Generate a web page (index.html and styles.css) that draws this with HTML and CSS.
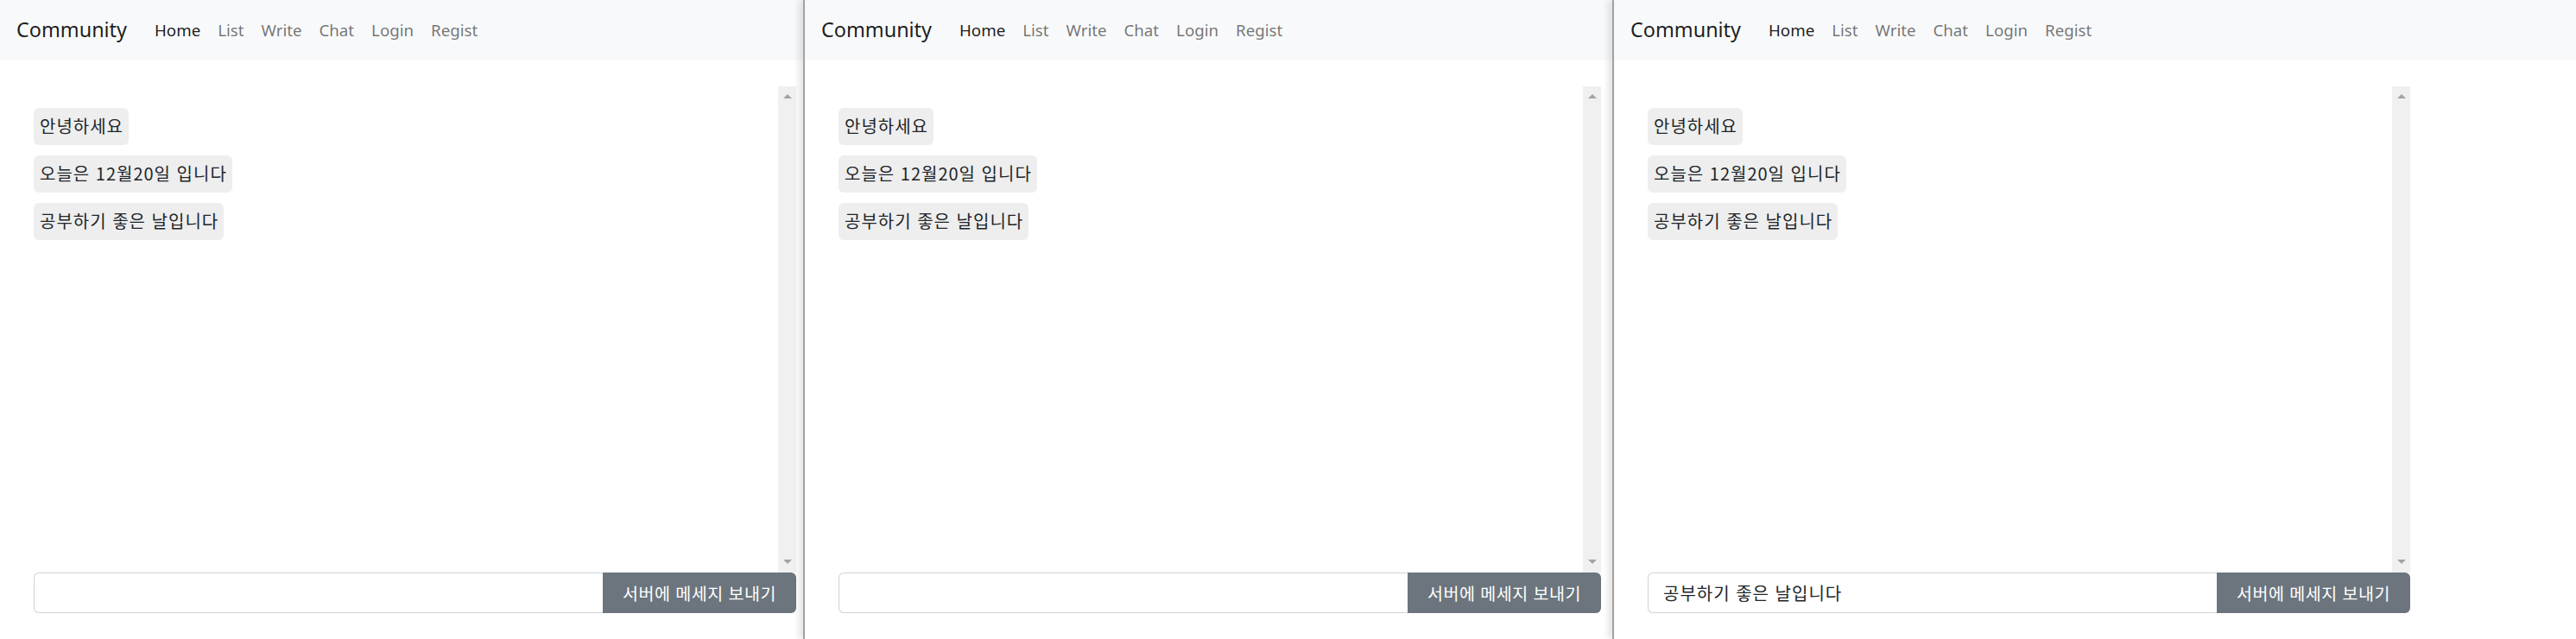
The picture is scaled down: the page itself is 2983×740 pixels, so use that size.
FILE: index.html
```html
<!DOCTYPE html>
<html lang="ko">
<head>
<meta charset="utf-8">
<title>Community Chat</title>
<link rel="stylesheet" href="styles.css">
</head>
<body>
<div class="desk">
  <section class="window w1">
    <nav class="navbar">
      <span class="brand">Community</span>
      <a class="nav-link active">Home</a>
      <a class="nav-link">List</a>
      <a class="nav-link">Write</a>
      <a class="nav-link">Chat</a>
      <a class="nav-link">Login</a>
      <a class="nav-link">Regist</a>
    </nav>
    <div class="chat">
      <div class="scrollbox">
        <div class="messages">
          <div class="bubble">안녕하세요</div>
          <div class="bubble">오늘은 12월20일 입니다</div>
          <div class="bubble">공부하기 좋은 날입니다</div>
        </div>
        <div class="scrollbar"><span class="arrow up"></span><span class="arrow down"></span></div>
      </div>
      <div class="input-group">
        <input class="field" type="text" value="">
        <button class="send">서버에 메세지 보내기</button>
      </div>
    </div>
  </section>
  <section class="window w2">
    <nav class="navbar">
      <span class="brand">Community</span>
      <a class="nav-link active">Home</a>
      <a class="nav-link">List</a>
      <a class="nav-link">Write</a>
      <a class="nav-link">Chat</a>
      <a class="nav-link">Login</a>
      <a class="nav-link">Regist</a>
    </nav>
    <div class="chat">
      <div class="scrollbox">
        <div class="messages">
          <div class="bubble">안녕하세요</div>
          <div class="bubble">오늘은 12월20일 입니다</div>
          <div class="bubble">공부하기 좋은 날입니다</div>
        </div>
        <div class="scrollbar"><span class="arrow up"></span><span class="arrow down"></span></div>
      </div>
      <div class="input-group">
        <input class="field" type="text" value="">
        <button class="send">서버에 메세지 보내기</button>
      </div>
    </div>
  </section>
  <section class="window w3">
    <nav class="navbar">
      <span class="brand">Community</span>
      <a class="nav-link active">Home</a>
      <a class="nav-link">List</a>
      <a class="nav-link">Write</a>
      <a class="nav-link">Chat</a>
      <a class="nav-link">Login</a>
      <a class="nav-link">Regist</a>
    </nav>
    <div class="chat">
      <div class="scrollbox">
        <div class="messages">
          <div class="bubble">안녕하세요</div>
          <div class="bubble">오늘은 12월20일 입니다</div>
          <div class="bubble">공부하기 좋은 날입니다</div>
        </div>
        <div class="scrollbar"><span class="arrow up"></span><span class="arrow down"></span></div>
      </div>
      <div class="input-group">
        <input class="field" type="text" value="공부하기 좋은 날입니다">
        <button class="send">서버에 메세지 보내기</button>
      </div>
    </div>
  </section>
</div>
</body>
</html>
```

FILE: styles.css
```css
* { box-sizing: border-box; }

html, body {
  margin: 0;
  padding: 0;
  background: #ffffff;
  height: 740px;
  overflow: hidden;
}

body {
  font-family: "Noto Sans", "Noto Sans CJK KR", sans-serif;
  color: #212529;
}

.desk {
  display: flex;
  height: 740px;
}

.window {
  background: #ffffff;
  height: 740px;
  flex: none;
}

.w1 { width: 930px; }
.w2 {
  width: 937px;
  border-left: 2px solid #a2a2a2;
  box-shadow: -5px 0 7px rgba(0, 0, 0, 0.10);
}
.w3 {
  flex: 1;
  border-left: 2px solid #a2a2a2;
  box-shadow: -5px 0 7px rgba(0, 0, 0, 0.10);
}

.navbar {
  height: 70px;
  background: #f8f9fa;
  display: flex;
  align-items: center;
  padding-left: 19px;
}

.brand {
  font-family: "Noto Sans", sans-serif;
  font-size: 23.4px;
  line-height: 1.5;
  color: rgba(0, 0, 0, 0.9);
  margin-right: 22px;
}

.nav-link {
  font-family: "Noto Sans", sans-serif;
  font-size: 18.7px;
  line-height: 1.5;
  color: rgba(0, 0, 0, 0.55);
  padding: 0 10px;
  text-decoration: none;
}

.nav-link.active { color: rgba(0, 0, 0, 0.9); }

.chat {
  width: 883px;
  margin: 30px 0 0 39px;
}

.scrollbox {
  display: flex;
  height: 563px;
}

.messages {
  flex: 1;
  padding-top: 25px;
  display: flex;
  flex-direction: column;
  align-items: flex-start;
  gap: 12.5px;
}

.bubble {
  font-family: "Noto Sans CJK KR", "Noto Sans", sans-serif;
  font-size: 20px;
  letter-spacing: 1px;
  line-height: 30px;
  padding: 6.25px 6px 6.25px 7px;
  background: #eeeeee;
  border-radius: 6px;
  color: #212529;
}

.scrollbar {
  width: 21px;
  background: #f0f0f0;
  display: flex;
  flex-direction: column;
  justify-content: space-between;
  align-items: center;
  padding: 9px 0 10px;
}

.arrow {
  width: 0;
  height: 0;
  border-left: 5px solid transparent;
  border-right: 5px solid transparent;
}
.arrow.up { border-bottom: 5px solid #a3a3a3; }
.arrow.down { border-top: 5px solid #a3a3a3; }

.input-group {
  display: flex;
  height: 47px;
}

.field {
  flex: 1;
  min-width: 0;
  height: 47px;
  border: 1px solid #ced4da;
  border-right: none;
  border-radius: 6px 0 0 6px;
  padding: 0 17px;
  font-family: "Noto Sans CJK KR", "Noto Sans", sans-serif;
  font-size: 20px;
  letter-spacing: 1px;
  color: #212529;
  background: #ffffff;
  outline: none;
}

.send {
  height: 47px;
  width: 224px;
  border: none;
  border-radius: 0 6px 6px 0;
  background: #6c757d;
  color: #ffffff;
  font-family: "Noto Sans CJK KR", "Noto Sans", sans-serif;
  font-size: 19.5px;
  letter-spacing: 0.5px;
  padding: 0;
}
```
